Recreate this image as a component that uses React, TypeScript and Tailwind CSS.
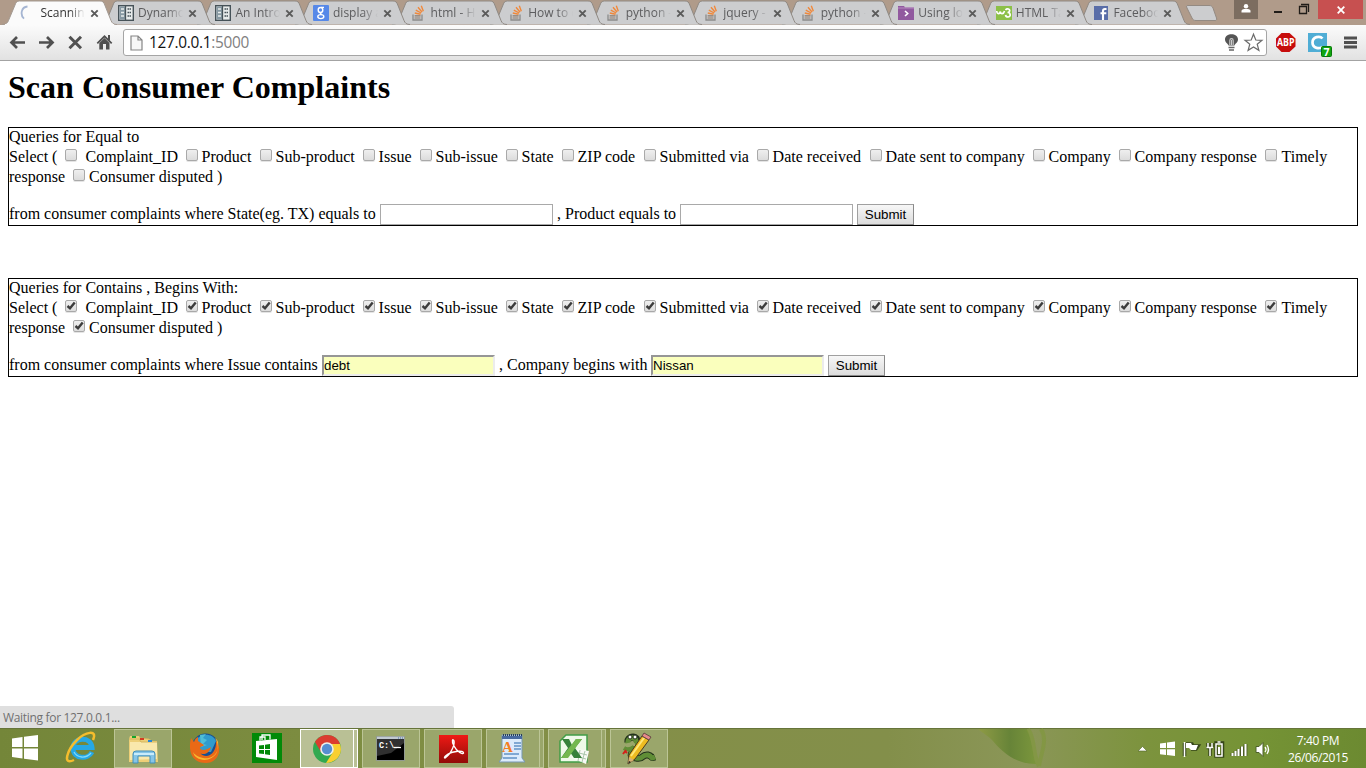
import React from "react";

const UI = "font-['Open_Sans','Noto_Sans',sans-serif]";
const SERIF = "font-['Liberation_Serif',serif]";
const SANS = "font-['Liberation_Sans',sans-serif]";

function StackIcon() {
  return (
    <svg className="relative left-[1px]" width="16" height="16" viewBox="0 0 16 16" fill="none">
      <path d="M2 9.5V15H11V9.5" stroke="#8b8b8b" strokeWidth="1.3" />
      <path d="M3.5 13H9.5M3.6 10.8H9.6" stroke="#8a7a6c" strokeWidth="1.2" />
      <path d="M3.8 8L9.6 9.3M4.8 5.2L10.2 8M7 2.3L11 7M10.3 .8L12.3 6.2" stroke="#f0883a" strokeWidth="1.4" />
    </svg>
  );
}
function BookIcon() {
  return (
    <svg width="16" height="16" viewBox="0 0 16 16">
      <rect x=".7" y=".7" width="14.6" height="14.6" fill="#e8ecec" stroke="#465258" strokeWidth="1.4" />
      <rect x="1.5" y="1.5" width="5.5" height="13" fill="#8698a2" />
      <path d="M7.5 1V15" stroke="#465258" strokeWidth="1.3" />
      <path d="M3 4H6M3 7.5H6M3 11H6" stroke="#e8ecec" strokeWidth="1.3" />
      <path d="M9.5 4H13M9.5 7.5H13M9.5 11H13" stroke="#465258" strokeWidth="1.6" strokeDasharray="1.5 .5" />
    </svg>
  );
}
function Favicon({ kind }: { kind: string }) {
  if (kind === "so") return <StackIcon />;
  if (kind === "book") return <BookIcon />;
  if (kind === "load")
    return (
      <svg width="16" height="16" viewBox="0 0 16 16" fill="none">
        <path d="M7.5 1.5C1 2 0 10 4 13.7" stroke="#a5b5d2" strokeWidth="1.8" />
      </svg>
    );
  if (kind === "google")
    return (
      <svg width="16" height="16" viewBox="0 0 16 16" fill="none">
        <rect width="16" height="16" rx="1" fill="#5688e8" />
        <ellipse cx="7.5" cy="5" rx="2.3" ry="2.5" stroke="#fff" strokeWidth="1.4" />
        <path d="M8 2.3H11M8.5 7.4C6.5 8.3 7.3 9 9 9.7" stroke="#fff" strokeWidth="1.3" />
        <ellipse cx="7.8" cy="11.6" rx="3" ry="2" stroke="#fff" strokeWidth="1.4" />
      </svg>
    );
  if (kind === "purple")
    return (
      <svg width="16" height="16" viewBox="0 0 16 16" fill="none">
        <path d="M0 1H6L7 2.5H16V15H0Z" fill="#91599f" />
        <path d="M0 3H16" stroke="#b78cc0" />
        <path d="M7 6L9.7 8.5L7 11" stroke="#fff" strokeWidth="1.6" />
      </svg>
    );
  if (kind === "w3")
    return (
      <svg className="relative left-[1px]" width="16" height="16" viewBox="0 0 16 16" fill="none">
        <rect y="1" width="16" height="14" fill="#8cc048" />
        <path d="M.7 6C1 9.5 3.7 9.5 4.3 6.5C4.5 9.5 7.5 9.5 8.5 6M9.5 5C11 3 14.5 4 13.5 6.3C13 7.4 12 7.5 11.5 7.5C15 7.5 15 12 12 12C10 12 9.7 11 9.5 10" stroke="#fff" strokeWidth="1.7" />
      </svg>
    );
  return (
    <svg className="relative left-[1px]" width="16" height="16" viewBox="0 0 16 16" fill="none">
      <rect x="0" y="1" width="14" height="14" fill="#5a6ea8" />
      <path d="M12.500 4H11C9.500 4 9 4.800 9 6V15M6.500 8.300H12.300" stroke="#fff" strokeWidth="2.1" />
    </svg>
  );
}

const tabs = [
  ["load", "Scanning"],
  ["book", "Dynamo"],
  ["book", "An Introd"],
  ["google", "display a"],
  ["so", "html - H"],
  ["so", "How to c"],
  ["so", "python -"],
  ["so", "jquery - "],
  ["so", "python -"],
  ["purple", "Using loc"],
  ["w3", "HTML Ta"],
  ["fb", "Faceboo"],
];

function Tab({ kind, title, active, order }: { kind: string; title: string; active: boolean; order: number }) {
  return (
    <div className="relative h-[25px] w-[97.55px] shrink-0" style={{ zIndex: order }}>
      <svg className="absolute left-[-6px] top-0" width="118" height="25" viewBox="0 0 118 25">
        <path
          d="M0 24.500C4 24.500 5.500 23 6.500 20.500L13 5C14 2 15 1 17.500 1H98C100.500 1 101.800 2 102.800 5L109 20.500C110 23 111.500 24.500 115 24.500"
          fill={active ? "#fbfbfb" : "#cccdcf"}
          stroke={active ? "#a39a92" : "#8f8983"}
          strokeWidth="1"
        />
        {active && <path d="M3 24.500H112" stroke="#fbfbfb" />}
      </svg>
      <div className="relative flex h-full items-center pl-[12px] pt-px">
        <Favicon kind={kind} />
        <div
          className={`ml-[4.400px] w-[45px] overflow-hidden whitespace-pre text-[12px] leading-[18px] [mask-image:linear-gradient(to_right,#000_65%,transparent)] ${UI} ${active ? "text-[#333]" : "text-[#5c5c5e]"}`}
        >
          {title}
        </div>
        <svg className="ml-[5px]" width="9" height="9" viewBox="0 0 9 9">
          <path d="M1.300 1.300L7.700 7.700M7.700 1.300L1.300 7.700" stroke="#5a5a5a" strokeWidth="1.9" />
        </svg>
      </div>
    </div>
  );
}

function TabStrip() {
  return (
    <div className="relative z-0 flex h-[25px] overflow-hidden bg-[#b09b8a] pl-[8px]">
      {tabs.map(([k, t], i) => (
        <Tab key={i} kind={k} title={t} active={i === 0} order={20 - i} />
      ))}
      <svg className="ml-[6px] shrink-0" width="36" height="25" viewBox="0 0 36 25">
        <path d="M3 5.5H24C26 5.5 27 6 28 8L31.5 18C32 20 31.5 20.5 30 20.5H11C9 20.5 8 20 7 18L2 8C1 6 1.5 5.5 3 5.5Z" fill="#cccdcf" stroke="#938a82" />
      </svg>
      <div className="ml-auto flex h-[19px] shrink-0">
        <div className="flex h-[19px] w-[24px] justify-center bg-[#7c6d60] pt-[4px]">
          <svg width="10" height="9" viewBox="0 0 10 9" fill="#fff">
            <circle cx="5" cy="2.2" r="2.2" />
            <path d="M.5 8.5V7C.5 5.5 2 5 5 5S9.500 5.500 9.500 7V8.500Z" />
          </svg>
        </div>
        <svg width="60" height="19" viewBox="0 0 60 19" fill="none" stroke="#201c18">
          <path d="M16 12H24" strokeWidth="2" />
          <path d="M41.500 6.500H48.500V13.500H41.500ZM43 4.500H50.500V12" strokeWidth="1.300" />
        </svg>
        <div className="mr-[3px] flex h-[19px] w-[45px] items-center justify-center bg-[#c75050]">
          <svg width="8" height="8" viewBox="0 0 8 8">
            <path d="M.7 .7L7.300 7.300M7.300 .7L.7 7.300" stroke="#fff" strokeWidth="1.800" />
          </svg>
        </div>
      </div>
    </div>
  );
}

function Toolbar() {
  return (
    <div className="flex h-[36px] items-start border-b border-[#a3a3a3] bg-linear-to-b from-[#fbfbfb] to-[#e2e2e2] pt-[4px]">
      <svg width="123" height="27" viewBox="0 0 123 27" fill="none" stroke="#505050">
        <path d="M25 13.500H11.500M17 8L11.500 13.500L17 19" strokeWidth="2.700" />
        <path d="M39 13.500H52.500M47 8L52.500 13.500L47 19" strokeWidth="2.700" />
        <path d="M69.500 7.700L81 19.200M81 7.700L69.500 19.200" strokeWidth="3" />
        <path d="M97.300 14.300L104.500 7.300L111.700 14.300" strokeWidth="1.800" />
        <path d="M99.300 14L104.500 9L109.500 14V20.500H106V15H103V20.500H99.300Z" fill="#505050" stroke="none" />
        <path d="M109 6V11" strokeWidth="2" />
      </svg>
      <div className="flex h-[27px] w-[1144px] items-center rounded-[3px] border border-[#a5a5a5] bg-white pl-[6px]">
        <svg width="13" height="16" viewBox="0 0 13 16">
          <path d="M1 1H8L12 5V15H1ZM8 1V5H12" fill="#f7f7f7" stroke="#858585" strokeWidth="1.200" />
        </svg>
        <span className={`ml-[6px] whitespace-nowrap text-[15.4px] tracking-[-0.300px] text-[#111] ${UI}`}>
          127.0.0.1<span className="text-[#808080]">:5000</span>
        </span>
        <svg className="ml-auto" width="44" height="25" viewBox="0 0 44 25" fill="none">
          <path d="M6.500 15.500C6 13.500 3 12.500 3 9.500C3 2.500 16 2.500 16 9.500C16 12.500 13 13.500 12.500 15.500Z" fill="#555" />
          <path d="M7.800 15V10.500C7.800 8 11.200 8 11.200 10.500V15M9.500 10V15" stroke="#ccc" strokeWidth="1.100" />
          <path d="M6.500 17.500H12.500M7 20H12" stroke="#666" strokeWidth="1.700" />
          <path d="M31.500 4.200L33.800 10L40 10.300L35.200 14.200L36.900 20.300L31.500 16.900L26.100 20.300L27.800 14.200L23 10.300L29.200 10Z" stroke="#6b6b6b" strokeWidth="1.200" />
        </svg>
      </div>
      <svg className="shrink-0" width="99" height="31" viewBox="0 0 99 31">
        <path d="M14.500 4H22.500L28.500 9.500V17.500L22.500 23H14.500L9 17.500V9.500Z" fill="#c70d0c" />
        <text x="10" y="17.300" fontSize="10" fontWeight="700" fill="#fff" textLength="17.500" lengthAdjust="spacingAndGlyphs" fontFamily="Open Sans">ABP</text>
        <rect x="41" y="4" width="19" height="19" fill="#4fadd5" />
        <path d="M55.500 9.500C53 6.500 45.500 7.500 45.500 13.500S53 20.500 55.500 17.500" fill="none" stroke="#fff" strokeWidth="2.700" />
        <rect x="54.500" y="17.500" width="10" height="10" rx="1" fill="#10a510" stroke="#087808" />
        <text x="56.600" y="26.500" fontSize="10.500" fontWeight="700" fill="#fff" fontFamily="Open Sans">7</text>
        <path d="M77 9H90M77 13.500H90M77 18H90" stroke="#505050" strokeWidth="2.800" />
      </svg>
    </div>
  );
}

function Check({ on }: { on: boolean }) {
  return (
    <span
      role="checkbox"
      aria-checked={on}
      className="mt-[3px] block h-[12px] w-[12px] shrink-0 rounded-[2px] border border-[#a9a9a9] bg-linear-to-b from-[#efefef] to-[#dcdcdc] shadow-[0_1px_0_#e4e4e4]"
    >
      {on && (
        <svg width="10" height="10" viewBox="0 0 10 10" fill="none">
          <path d="M1.500 5L4 7.300L8.700 1.500" stroke="#3c3c3c" strokeWidth="2.400" />
        </svg>
      )}
    </span>
  );
}

const columns: [string, string][] = [
  ["Complaint_ID", "w-[121px]"],
  ["Product", "w-[74px]"],
  ["Sub-product", "w-[103px]"],
  ["Issue", "w-[57px]"],
  ["Sub-issue", "w-[86px]"],
  ["State", "w-[56px]"],
  ["ZIP code", "w-[82px]"],
  ["Submitted via", "w-[113px]"],
  ["Date received", "w-[113px]"],
  ["Date sent to company", "w-[163px]"],
  ["Company", "w-[86px]"],
  ["Company response", "w-[146px]"],
  ["Timely", "w-[70px]"],
];

function QueryBox({ title, on, children }: { title: string; on: boolean; children: React.ReactNode }) {
  return (
    <div className="h-[99px] border border-black">
      <div className="h-[18px] leading-[18px]">{title}</div>
      <div className="flex h-[20px] leading-[22px]">
        <span className="w-[56px] shrink-0">Select (</span>
        {columns.map(([name, width], i) => (
          <span key={name} className={`flex shrink-0 ${width}`}>
            <Check on={on} />
            <span className={i === 0 ? "ml-[8.500px]" : i === 12 ? "ml-[4.500px]" : "ml-[3.600px]"}>{name}</span>
          </span>
        ))}
      </div>
      <div className="flex h-[20px] leading-[22px]">
        <span className="w-[64px]">response</span>
        <Check on={on} />
        <span className="ml-[4px]">Consumer disputed )</span>
      </div>
      <div className="mt-[18px] flex h-[21px] leading-[20px]">{children}</div>
    </div>
  );
}

function Field({ value }: { value?: string }) {
  return (
    <input
      readOnly
      defaultValue={value}
      className={`h-[21px] w-[173px] shrink-0 text-[13.33px] text-black outline-none ${SANS} ${
        value
          ? "border-2 border-b-[#ececec] border-l-[#969696] border-r-[#ececec] border-t-[#969696] bg-[#faffbd]"
          : "border border-[#a9a9a9] bg-white"
      }`}
    />
  );
}

function Submit() {
  return (
    <button
      className={`ml-[4px] h-[21px] w-[57px] border border-b-[#8a8a8a] border-l-[#a0a0a0] border-r-[#8a8a8a] border-t-[#a0a0a0] bg-linear-to-b from-[#f7f7f7] to-[#dcdcdc] text-[13.33px] leading-[19px] text-black ${SANS}`}
    >
      Submit
    </button>
  );
}

function TaskButton({ width, active, stacked, children }: { width: string; active?: boolean; stacked?: boolean; children: React.ReactNode }) {
  const tone = active ? "border-white bg-[#b9c095]" : "border-[#bcc596] bg-[#9aa66b]";
  return (
    <div className={`flex h-[39px] shrink-0 ${width}`}>
      <div className={`flex flex-1 items-center justify-center border ${tone}`}>{children}</div>
      {stacked && <div className={`w-[4px] border border-l-0 ${tone}`} />}
    </div>
  );
}

function Taskbar() {
  return (
    <div className="relative flex h-[40px] bg-[linear-gradient(90deg,#748639_0%,#7c8c40_22%,#848f48_45%,#838f4a_65%,#8b9658_75%,#7c933d_84%,#759335_92%,#6c8a31_100%)] pt-px shadow-[inset_0_1px_0_#66743a]">
      <svg className="absolute left-[966px] top-0" width="90" height="40" viewBox="0 0 90 40">
        <defs>
          <linearGradient id="leaf">
            <stop offset="0" stopColor="#8f9b45" />
            <stop offset=".55" stopColor="#678438" />
            <stop offset="1" stopColor="#7b963c" />
          </linearGradient>
        </defs>
        <path d="M12 1H61C67 14 67 30 70 36C49 36 35 23 26 12C21 7 17 5 12 1Z" fill="url(#leaf)" />
        <path d="M62 1C70 12 66 25 73 38M75 1C82 12 75 25 73 38" fill="none" stroke="#7e983b" strokeWidth="4" opacity=".6" />
      </svg>
      <div className="flex w-[114px] shrink-0">
        <svg width="114" height="39" viewBox="0 0 114 39" fill="none">
          <path d="M12 9.500L22.500 8V18H12ZM24 7.800L38 6V18H24ZM12 19.500H22.500V29.500L12 28ZM24 19.500H38V31.500L24 29.800Z" fill="#fff" />
          <path d="M92 23C88 31 73 30 73 19C73 8 91 7 92 18.500H75" stroke="#26a8e5" strokeWidth="5" />
          <path d="M91 24C86 30 77 29 74 23" stroke="#80dbfa" strokeWidth="1.300" />
          <path d="M93 11C98 0 85 3 77 11C67 21 62 37 74 31" stroke="#f5bd2d" strokeWidth="2.500" />
        </svg>
      </div>
      <TaskButton width="w-[58px]">
        <svg width="34" height="30" viewBox="0 0 34 30">
          <path d="M3 5L4 2H13L15 5H24L25 7H31L32 28H3Z" fill="#edcf77" />
          <path d="M4 8H31V25L4 26Z" fill="#f9e8ac" />
          <path d="M3 5H13L15 8H31M13 4L23 5L25 8" fill="none" stroke="#d6b65e" />
          <path d="M6 3H10" stroke="#17a52c" strokeWidth="2" />
          <path d="M14 5H18" stroke="#d43b23" strokeWidth="2" />
          <path d="M22 7H26" stroke="#2686d8" strokeWidth="2" />
          <path d="M7 29V20Q7 17 10 17H26Q29 17 29 20V29H24V22H12V29Z" fill="#86c5e7" stroke="#438fb9" />
          <path d="M8 20H28" stroke="#c9ecfb" strokeWidth="2" />
        </svg>
      </TaskButton>
      <svg className="shrink-0" width="128" height="39" viewBox="0 0 128 39">
        <circle cx="33.500" cy="18" r="13.500" fill="#184f91" />
        <path d="M25 10C29 4 41 4 44 12L39 23H29Z" fill="#319bcd" />
        <path d="M28 6L34 5L31 9L35 11L31 15L35 16L29 18Z" fill="#50bed7" />
        <path d="M19 9L22 13C23 10 24 9 26 8L26 12L32 16C31 18 28 17 28 19C30 23 36 20 39 18C37 26 30 26 28 24C34 31 45 25 44 12C51 20 46 34 34 34C19 34 16 21 19 9Z" fill="#e96916" />
        <path d="M21 23C23 33 40 34 45 23C49 12 44 10 43 9C51 23 40 31 31 29C26 28 22 25 21 23Z" fill="#f8b930" />
        <rect x="80" y="4" width="30" height="30" fill="#028a08" />
        <path d="M84 12L105 10V31L84 28Z" fill="#fff" />
        <path d="M88 11.500V8H93V11M90 11V6H98V10.500" fill="none" stroke="#fff" strokeWidth="1.300" />
        <path d="M87 16.500L92 16V20H87ZM93 15.800L98 15V20H93ZM87 21H92V25L87 24.500ZM93 21H98V26L93 25.300Z" fill="#028a08" />
      </svg>
      <TaskButton width="w-[58px]" active stacked>
        <svg width="30" height="30" viewBox="0 0 30 30">
          <circle cx="15" cy="15" r="14" fill="#31a950" />
          <path d="M3 8C9-2 24-1 28 10H15L9 18Z" fill="#db3c30" />
          <path d="M28 10C32 21 23 29 14 29L21 18L20 10Z" fill="#f9cf31" />
          <circle cx="15" cy="15" r="6.800" fill="#eef1ea" />
          <circle cx="15" cy="15" r="5.200" fill="#568ed1" />
        </svg>
      </TaskButton>
      <div className="ml-[4px] flex gap-[4px]">
        <TaskButton width="w-[58px]">
          <svg className="relative left-[-1px]" width="29" height="25" viewBox="0 0 29 25">
            <rect x=".5" y=".5" width="28" height="24" fill="#000" stroke="#929a91" />
            <path d="M1 2H28" stroke="#c1cad2" strokeWidth="2.500" />
            <path d="M1 20V4H28V7L15 17Z" fill="#303030" />
            <text x="3" y="12" fill="#fff" fontSize="8.500" fontWeight="700" fontFamily="Liberation Mono">C:\</text>
            <path d="M18 11.500H25" stroke="#fff" strokeWidth="1.300" />
            <path d="M22 2H27" stroke="#4974a5" strokeDasharray="1 1" />
          </svg>
        </TaskButton>
        <TaskButton width="w-[58px]">
          <svg width="29" height="28" viewBox="0 0 29 28">
            <defs><linearGradient id="pdf" x2="0" y2="1"><stop stopColor="#ee1915" /><stop offset="1" stopColor="#920b08" /></linearGradient></defs>
            <rect width="29" height="28" fill="url(#pdf)" />
            <path d="M7 22C10 21 16 11 15 6C14 3 12 6 15 11C18 17 24 20 24.500 18C25 15 14 16 9 19C4 22 5 25 8 21" fill="none" stroke="#fff" strokeWidth="1.400" />
          </svg>
        </TaskButton>
        <TaskButton width="w-[58px]" stacked>
          <svg className="relative left-[-1px]" width="26" height="29" viewBox="0 0 26 29">
            <path d="M3 1H23V24L26 28H0L3 24Z" fill="#dcecfb" stroke="#7797b2" />
            <path d="M3 2H23V5H3Z" fill="#486aa0" />
            <path d="M4 1H23" stroke="#253d5d" strokeWidth="2" strokeDasharray="1 1" />
            <text x="3" y="18" fill="#f48022" fontSize="15" fontWeight="700" fontFamily="Liberation Serif">A</text>
            <path d="M15 9H22M15 12H22M15 15H22M5 20H20M4 24H18" stroke="#6293c6" strokeWidth="1.300" />
          </svg>
        </TaskButton>
        <TaskButton width="w-[58px]" stacked>
          <svg className="relative left-[-1px]" width="32" height="30" viewBox="0 0 32 30">
            <path d="M8 1H29V28H2V7Z" fill="#eff9e9" stroke="#429d47" strokeWidth="1.500" />
            <path d="M15 14L31 17L28 30L14 24Z" fill="#f8faf5" />
            <path d="M17 18L29 21M16 22L28 25M22 16L20 27M27 17L24 28" stroke="#a9c6aa" />
            <path d="M4 5H11L14 11L18 5H24L17 14L24 24H16L12 18L8 24H3L10 14Z" fill="#37813b" />
            <path d="M18 5H24L10 24H3Z" fill="#74b84f" />
          </svg>
        </TaskButton>
        <TaskButton width="w-[58px]">
          <svg width="34" height="34" viewBox="0 0 34 34" fill="none">
            <path d="M6 10C5 5 14 3 15 8C19 12 17 17 12 18C8 22 8 26 14 26C22 28 19 22 26 23C31 24 28 27 33 25" stroke="#23321b" strokeWidth="7" />
            <path d="M6 11C5 5 14 4 14 9C18 13 15 17 11 18C8 22 8 25 14 26C22 28 19 22 26 23C31 24 28 28 33 25" stroke="#608e36" strokeWidth="5" />
            <path d="M2 16C5 18 9 17 12 15" stroke="#608e36" strokeWidth="4" />
            <circle cx="8" cy="5" r="2" fill="#fff" stroke="#26351b" />
            <circle cx="13" cy="5" r="2" fill="#fff" stroke="#26351b" />
            <path d="M4 18L1 22M3 19L5 21" stroke="#d32119" strokeWidth="2" />
            <path d="M6 32L7 23L20 4L27 8L13 27Z" fill="#edbc21" stroke="#4b3a20" />
            <path d="M9 24L22 6" stroke="#ffe779" strokeWidth="2" />
            <path d="M20 4L22 1L29 5L27 8Z" fill="#e7898c" stroke="#674c45" />
            <path d="M6 32L7 25L12 28Z" fill="#d7b174" />
            <path d="M6 32L7 29L9 30Z" fill="#222" />
          </svg>
        </TaskButton>
      </div>
      <div className="ml-auto flex shrink-0">
        <svg width="152" height="39" viewBox="0 0 152 39" fill="none">
          <path d="M8 22L12.500 17.500L17 22Z" fill="#fff" stroke="#53672a" strokeWidth=".6" />
          <g stroke="#36461a" strokeWidth="3.500">
            <path d="M54.500 14V27M56 15H62L63 17H68L66 20H61M78 14V18M82 14V18M76.500 18.500H83M80 19V27M86 14H92.500V27H86Z" />
          </g>
          <path d="M30 14.500L36 13.700V19H30ZM37 13.500L45 12.500V19H37ZM30 20.300H36V26L30 25.200ZM37 20.300H45V27L37 26Z" fill="#fff" />
          <path d="M54.500 13V28" stroke="#fff" strokeWidth="1.500" />
          <path d="M56 14H61L62 16H68L66 21H61L59 19H56Z" fill="#fff" />
          <path d="M78 14V18M82 14V18M76.500 18.500H83M80 19V27" stroke="#fff" strokeWidth="1.500" />
          <path d="M86 15H92V27H86ZM87.500 13H90.500" stroke="#fff" strokeWidth="1.500" />
          <path d="M89 18V25" stroke="#fff" strokeWidth="2" />
          <path d="M102.500 24V27M105.500 22V27M108.500 20V27M112 17.500V27M115.500 15V27" stroke="#4c5d25" strokeWidth="3.800" />
          <path d="M102.500 24V27M105.500 22V27M108.500 20V27M112 17.500V27M115.500 15V27" stroke="#fff" strokeWidth="2" />
          <path d="M126 17.500H129L133 13.500V27.500L129 23.500H126Z" fill="#fff" stroke="#4d602b" />
          <path d="M135 18Q137 20.500 135 23M137 16Q140 20.500 137 25" stroke="#fff" strokeWidth="1.300" />
        </svg>
        <div className={`mr-[12px] w-[72px] pt-[3px] text-center text-[12px] leading-[17px] tracking-[-0.350px] text-white ${UI}`}>
          <div>7:40 PM</div>
          <div className="whitespace-nowrap">26/06/2015</div>
        </div>
      </div>
    </div>
  );
}

export default function App() {
  return (
    <div className="flex h-[768px] w-[1366px] flex-col overflow-hidden bg-white">
      <TabStrip />
      <Toolbar />
      <main className={`relative h-[667px] px-[8px] pt-[8px] text-[16px] text-black ${SERIF}`}>
        <h1 className="mb-[21px] h-[37px] text-[32px] font-bold leading-[37px] tracking-[0.020px]">Scan Consumer Complaints</h1>
        <QueryBox title="Queries for Equal to" on={false}>
          <span className="w-[371px] shrink-0">from consumer complaints where State(eg. TX) equals to</span>
          <Field />
          <span className="w-[127px] shrink-0 pl-[4px]">, Product equals to</span>
          <Field />
          <Submit />
        </QueryBox>
        <div className="h-[52px]" />
        <QueryBox title="Queries for Contains , Begins With:" on>
          <span className="w-[313px] shrink-0">from consumer complaints where Issue contains</span>
          <Field value="debt" />
          <span className="w-[156px] shrink-0 pl-[4px]">, Company begins with</span>
          <Field value="Nissan" />
          <Submit />
        </QueryBox>
        <div className={`absolute bottom-0 left-0 h-[22px] w-[454px] rounded-tr-[3px] bg-[#dfdfdf] pl-[3px] text-[12px] leading-[23px] tracking-[-0.320px] text-[#707070] ${UI}`}>
          Waiting for 127.0.0.1...
        </div>
      </main>
      <Taskbar />
    </div>
  );
}
